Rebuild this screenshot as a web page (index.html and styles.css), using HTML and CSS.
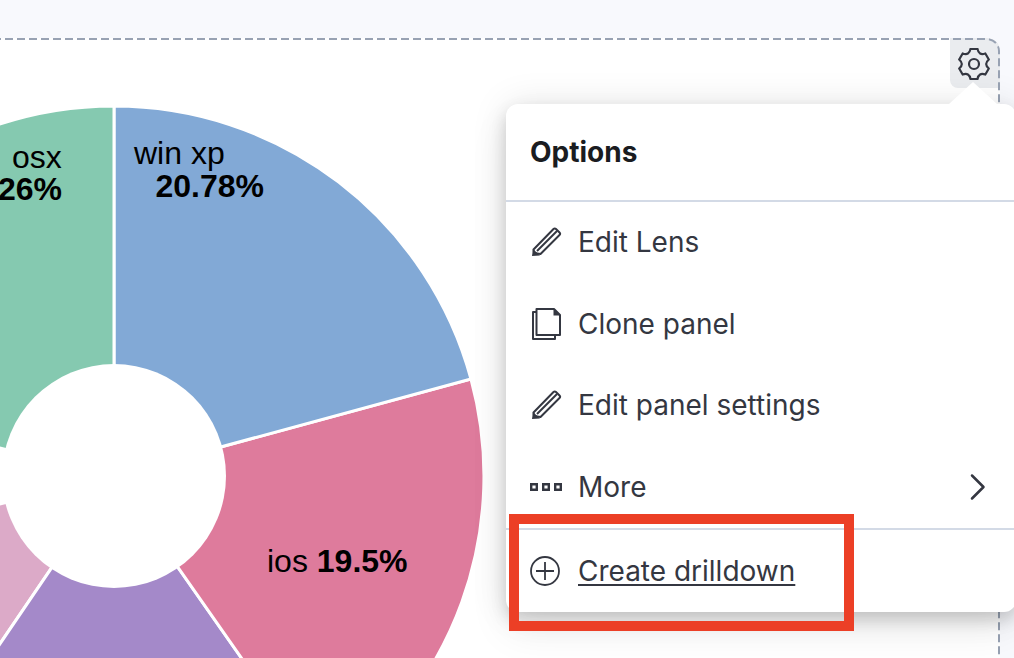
FILE: index.html
```html
<!DOCTYPE html>
<html lang="en">
<head>
<meta charset="utf-8">
<title>Panel options</title>
<link rel="stylesheet" href="styles.css">
</head>
<body>
<main class="panel">
  <svg class="chart" viewBox="0 0 1020 620" aria-label="Pie chart">
    <g transform="translate(134 438)" stroke="#fff" stroke-width="3">
      <path class="s-pale" d="M-359.4 88 A370 370 0 0 0 -207.9 306 L0 0Z" />
      <path class="s-purple" d="M-207.9 306 A370 370 0 0 0 212.2 303.1 L0 0Z" />
      <path class="s-pink" d="M212.2 303.1 A370 370 0 0 0 357 -97 L0 0Z" />
      <path class="s-blue" d="M0 -370 A370 370 0 0 1 357 -97 L0 0Z" />
      <path class="s-green" d="M0 -370 A370 370 0 0 0 -359.4 -88 L0 0Z" />
      <circle class="hole" r="112" stroke="none" />
    </g>
    <g class="labels">
      <text x="32" y="130">osx</text>
      <text x="82" y="162" class="pct" text-anchor="end">26%</text>
      <text x="154" y="126">win xp</text>
      <text x="175.500" y="159" class="pct">20.78%</text>
      <text x="287" y="534">ios <tspan class="pct">19.5%</tspan></text>
    </g>
  </svg>
  <button class="gear" aria-label="Options">
    <svg viewBox="0 0 32 32" width="32" height="32"><path class="ln cog" d="M12.510.9H19.490Q20.750 7.770 27.330 5.430L30.820 11.470Q25.500 16 30.820 20.530L27.330 26.570Q20.750 24.230 19.490 31.100H12.510Q11.250 24.230 4.670 26.570L1.180 20.530Q6.500 16 1.180 11.470L4.670 5.430Q11.250 7.770 12.510.9Z"/><circle class="ln cog" cx="16" cy="16" r="5"/></svg>
  </button>
  <svg class="dash" width="1020" height="720" aria-hidden="true"><rect class="dash-line" x="1" y="1" width="1018" height="800" rx="12"/></svg>
</main>

<section class="popover">
  <span class="arrow"></span>
  <h2 class="title">Options</h2>
  <ul class="menu">
    <li class="item">
      <svg class="icon" viewBox="0 0 32 32"><path class="ln" d="M23.500 3c.8-.8 1.700-.8 2.500 0l3.500 3.500c.8.800.8 1.700 0 2.500L10.500 28l-6.500-1-.5-3.500z"/><path class="ln" d="M7 25 27 5"/><path class="fl" d="M3 23l7 6.500L2 30z"/></svg>
      <span>Edit Lens</span>
    </li>
    <li class="item">
      <svg class="icon" viewBox="0 0 32 32"><path class="ln" d="M6.500 1H24l6 6v20H6.500z"/><path class="fl" d="M23.500 1l6.500 6.500h-6.500z"/><path class="ln" d="M6.500 4H3v27h22v-4"/></svg>
      <span>Clone panel</span>
    </li>
    <li class="item">
      <svg class="icon" viewBox="0 0 32 32"><path class="ln" d="M23.500 3c.8-.8 1.700-.8 2.500 0l3.500 3.500c.8.800.8 1.700 0 2.500L10.500 28l-6.500-1-.5-3.500z"/><path class="ln" d="M7 25 27 5"/><path class="fl" d="M3 23l7 6.500L2 30z"/></svg>
      <span>Edit panel settings</span>
    </li>
    <li class="item">
      <svg class="icon" viewBox="0 0 32 32"><path class="dots" d="M1.200 13.200h5.600v5.600H1.200zM13.200 13.200h5.600v5.600h-5.600zM25.200 13.200h5.600v5.600h-5.600z"/></svg>
      <span class="grow">More</span>
      <svg class="chev" viewBox="0 0 16 32"><path class="ln chev-line" d="M2 4.500l11.500 11.500L2 27.500"/></svg>
    </li>
  </ul>
  <div class="footer">
    <svg class="icon plus" viewBox="0 0 32 32"><circle class="thin" cx="16" cy="16" r="14"/><path class="thin" d="M16 7v18M7 16h18"/></svg>
    <a class="link" href="#">Create drilldown</a>
  </div>
</section>
<div class="callout"></div>
</body>
</html>
```
FILE: styles.css
```css
* { box-sizing: border-box; }
html, body { margin: 0; height: 100%; }
body {
  position: relative;
  height: 658px;
  overflow: hidden;
  background: #f8f9fd;
  padding-top: 38px;
  font-family: Inter, "Liberation Sans", sans-serif;
}
.panel {
  position: relative;
  height: 660px;
  margin: 0 14px 0 -20px;
  background: #fff;
  border-radius: 0 12px 0 0;
  overflow: hidden;
}
.chart { display: block; width: 1020px; height: 620px; }
.s-green { fill: #85c9b0; }
.s-blue { fill: #82a9d6; }
.s-pink { fill: #de7b9c; }
.s-purple { fill: #a489c9; }
.s-pale { fill: #dcaac8; }
.hole { fill: #fff; }
.labels { font: 32px "Liberation Sans", Arial, sans-serif; fill: #000; }
.pct { font-weight: 700; }
.dash { position: absolute; left: 0; top: 0; pointer-events: none; }
.dash-line { fill: none; stroke: #98a2b3; stroke-width: 2; stroke-dasharray: 8 4; }
.gear {
  position: absolute;
  top: 0;
  right: 0;
  width: 50px;
  height: 50px;
  padding: 10px 0 0 8px;
  border: 0;
  border-radius: 0 12px 0 8px;
  background: #eaecef;
  display: flex;
  align-items: flex-start;
  justify-content: flex-start;
}
.ln { fill: none; stroke: #343741; stroke-width: 2; stroke-linejoin: round; }
.cog { stroke-width: 2.200; }
.chev-line { stroke-width: 2.500; stroke-linecap: round; }
.dots { fill: none; stroke: #343741; stroke-width: 2.400; }
.thin { fill: none; stroke: #343741; stroke-width: 1.800; }
.fl { fill: #343741; }
.popover {
  position: absolute;
  left: 506px;
  top: 104px;
  width: 510px;
  height: 508px;
  background: #fff;
  border-radius: 12px;
  box-shadow: 0 0 36px rgba(0,0,0,.1), 0 8px 16px rgba(0,0,0,.14), 0 20px 40px rgba(0,0,0,.07);
  color: #343741;
}
.arrow {
  position: absolute;
  left: 443px;
  top: -22px;
  width: 48px;
  height: 22px;
  background: #fff;
  clip-path: polygon(50% 0, 100% 100%, 0 100%);
}
.title {
  margin: 0;
  height: 98px;
  padding: 26px 24px 0;
  font-size: 28px;
  line-height: 44px;
  font-weight: 700;
  color: #1a1c21;
  border-bottom: 2px solid #d3dae6;
}
.menu { list-style: none; margin: -1px 0 0; padding: 0; height: 329px; border-bottom: 2px solid #d3dae6; }
.item {
  height: 81.700px;
  display: flex;
  align-items: center;
  padding: 0 0 0 24px;
  font-size: 28px;
}
.icon { width: 32px; height: 32px; margin-right: 16px; flex: none; }
.item .grow { flex: 0 0 392px; }
.chev { width: 16px; height: 32px; }
.footer { display: flex; align-items: center; height: 81px; padding-left: 23px; font-size: 28px; }
.plus { margin-right: 17px; }
.link { color: #343741; text-decoration: underline; text-decoration-thickness: 2px; text-underline-offset: 3px; }
.callout {
  position: absolute;
  left: 509px;
  top: 514px;
  width: 345px;
  height: 117px;
  border: 10px solid #ec3f26;
}
```
